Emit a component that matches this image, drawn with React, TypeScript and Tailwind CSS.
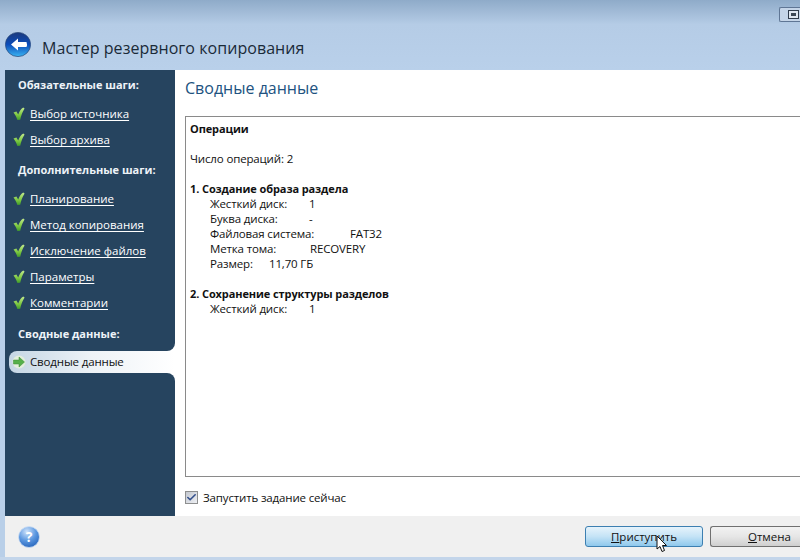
import { Check } from "lucide-react";

const font = { fontFamily: '"Open Sans", "Noto Sans", sans-serif' };

function Tick() {
  return (
    <svg width="13" height="14" viewBox="0 0 13 14" className="shrink-0">
      <defs>
        <linearGradient id="tick" x1="0" y1="0" x2="0" y2="1">
          <stop offset="0" stopColor="#c4ea8f" />
          <stop offset="0.6" stopColor="#7cc83f" />
          <stop offset="1" stopColor="#3f9a2c" />
        </linearGradient>
      </defs>
      <path d="M0.5 5.5 L3.4 4.6 L5.2 7.6 C6.2 4.6 7.8 2 10.2 0.5 L11.6 1.6 C9.6 4.6 8.2 8.4 7.2 12.8 L4.4 13 C3.6 10.2 2.2 7.6 0.5 5.5 Z" fill="url(#tick)" />
    </svg>
  );
}

function Heading({ children }: { children: string }) {
  return <div className="h-[26px] pl-[13px] text-[11px] leading-[26px] font-bold text-[#eef3f8]">{children}</div>;
}

function Step({ label }: { label: string }) {
  return (
    <div className="flex h-[26px] items-center gap-[4px] pl-[8px] text-[11.5px] text-white">
      <Tick />
      <span className="underline underline-offset-2">{label}</span>
    </div>
  );
}

function ActiveStep() {
  return (
    <div className="relative ml-[4px] flex h-[22px] items-center gap-[4px] rounded-l-[8px] bg-gradient-to-r from-[#c5d6e4] via-[#eef3f7] to-white pl-[3px] text-[11.5px] tracking-[-0.15px] text-[#111]">
      <svg width="14" height="14" viewBox="0 0 14 14" className="shrink-0">
        <circle cx="7" cy="7" r="6.5" fill="#e3efdc" />
        <path d="M1.5 5 H7 V2 L12.5 7 L7 12 V9 H1.5 Z" fill="#55b04a" stroke="#3b8a35" strokeWidth="0.5" />
      </svg>
      <span>Сводные данные</span>
      <div className="absolute -top-[8px] right-0 h-[8px] w-[8px] bg-white">
        <div className="h-full w-full rounded-br-[8px] bg-[#26445f]" />
      </div>
      <div className="absolute -bottom-[8px] right-0 h-[8px] w-[8px] bg-white">
        <div className="h-full w-full rounded-tr-[8px] bg-[#26445f]" />
      </div>
    </div>
  );
}

function Row({ label, value, width }: { label: string; value: string; width: number }) {
  return (
    <div className="flex h-[15px] pl-[20px]">
      <span style={{ width }}>{label}</span>
      <span>{value}</span>
    </div>
  );
}

export default function App() {
  return (
    <div style={font} className="relative flex h-[560px] w-[800px] flex-col overflow-hidden bg-[#b9cfe8]">
      <div className="relative flex h-[70px] items-start bg-gradient-to-b from-[#8fabc9] from-0% via-[#b5cce6] via-35% to-[#b9d0ea] pt-[32px] pl-[5px]">
        <svg width="26" height="25" viewBox="0 0 26 25" className="shrink-0">
          <defs>
            <linearGradient id="back" x1="0" y1="0" x2="0" y2="1">
              <stop offset="0" stopColor="#1c3a7d" />
              <stop offset="0.5" stopColor="#0b4cba" />
              <stop offset="1" stopColor="#3ab4f2" />
            </linearGradient>
          </defs>
          <ellipse cx="13" cy="12.5" rx="12.6" ry="12.1" fill="url(#back)" stroke="#2a4778" strokeWidth="0.7" />
          <path d="M6 12.5 L13 6.5 L13 10 L21.5 10 Q22.5 12.5 21.5 15 L13 15 L13 18.5 Z" fill="#fff" />
        </svg>
        <span className="mt-[-1px] ml-[11px] text-[16px] leading-[34px] tracking-[0.05px] text-[#1a2a38]">Мастер резервного копирования</span>
        <div className="absolute top-[7px] right-0 flex h-[15px] w-[21px] items-center rounded-l-[2px] border border-r-0 border-[#5f7695] bg-[#c5d5e8] pl-[8px]">
          <div className="flex h-[9px] w-[11px] items-center justify-center border border-[#2f3b4a] bg-[#dfe7f0]">
            <div className="h-[3px] w-[5px] bg-[#3b4754]" />
          </div>
        </div>
      </div>

      <div className="flex h-[446px] pl-[5px]">
        <div className="flex w-[170px] shrink-0 flex-col bg-[#26445f] pt-[2px]">
          <Heading>Обязательные шаги:</Heading>
          <div className="mt-[3px]">
            <Step label="Выбор источника" />
            <Step label="Выбор архива" />
          </div>
          <div className="mt-[4px]"><Heading>Дополнительные шаги:</Heading></div>
          <div className="mt-[3px]">
            <Step label="Планирование" />
            <Step label="Метод копирования" />
            <Step label="Исключение файлов" />
            <Step label="Параметры" />
            <Step label="Комментарии" />
          </div>
          <div className="mt-[5px] mb-[4px]"><Heading>Сводные данные:</Heading></div>
          <ActiveStep />
        </div>

        <div className="flex flex-1 flex-col bg-white pl-[10px]">
          <div className="h-[46px] pt-[6px] text-[16px] leading-[24px] text-[#21527f]">Сводные данные</div>
          <div className="h-[361px] border border-r-0 border-[#8a8a8a] pt-[4px] pl-[4px] text-[11.5px] leading-[15px] tracking-[-0.15px] text-[#111]">
            <div className="text-[11px] font-bold tracking-[-0.1px]">Операции</div>
            <div className="mt-[15px]">Число операций: 2</div>
            <div className="mt-[15px] text-[11px] font-bold tracking-[-0.1px]">1. Создание образа раздела</div>
            <Row label="Жесткий диск:" value="1" width={99} />
            <Row label="Буква диска:" value="-" width={99} />
            <Row label="Файловая система:" value="FAT32" width={140} />
            <Row label="Метка тома:" value="RECOVERY" width={100} />
            <Row label="Размер:" value="11,70 ГБ" width={59} />
            <div className="mt-[15px] text-[11px] font-bold tracking-[-0.1px]">2. Сохранение структуры разделов</div>
            <Row label="Жесткий диск:" value="1" width={99} />
          </div>
          <div className="mt-[12px] flex items-center gap-[5px] text-[11.5px] tracking-[-0.15px] text-[#111]">
            <div className="flex h-[13px] w-[13px] items-center justify-center border border-[#8e8f8f] bg-gradient-to-br from-[#c4c8d0] to-[#eef0f4]">
              <Check size={11} strokeWidth={3.5} className="text-[#34508c]" />
            </div>
            <span>Запустить задание сейчас</span>
          </div>
        </div>
      </div>

      <div className="ml-[5px] flex h-[41px] items-center bg-[#f0f0f0] pl-[13px]">
        <svg width="22" height="22" viewBox="0 0 22 22" className="shrink-0">
          <defs>
            <radialGradient id="help" cx="0.4" cy="0.25" r="0.85">
              <stop offset="0" stopColor="#cfe3fb" />
              <stop offset="0.5" stopColor="#5c98e0" />
              <stop offset="1" stopColor="#1d5bb5" />
            </radialGradient>
          </defs>
          <circle cx="11" cy="11" r="10.5" fill="url(#help)" stroke="#cfe0f4" strokeWidth="0.8" />
          <text x="11" y="16" textAnchor="middle" fontSize="14" fontWeight="700" fill="#fff" fontFamily="Open Sans, sans-serif">?</text>
        </svg>
        <div className="ml-auto flex gap-[7px]">
          <button className="flex h-[21px] w-[118px] items-center justify-center rounded-[3px] border border-[#3c7fb1] bg-gradient-to-b from-[#e6f3fb] via-[#c4e3f6] to-[#8fc8ec] text-[11.5px] text-[#111]">
            <span><span className="underline">П</span>риступить</span>
          </button>
          <button className="flex h-[21px] w-[90px] items-center justify-start rounded-l-[3px] border border-r-0 border-[#707070] bg-gradient-to-b from-[#f2f2f2] via-[#e6e6e6] to-[#cfcfcf] pl-[37px] text-[11.5px] text-[#111]">
            <span><span className="underline">О</span>тмена</span>
          </button>
        </div>
      </div>
      <div className="flex-1 bg-[#c3d5ea]" />

      <svg width="12" height="18" viewBox="0 0 12 18" className="absolute top-[535px] left-[656px]">
        <path d="M1 1 L1 14 L4 11.5 L6 16.5 L8.5 15.5 L6.5 10.5 L10.5 10.5 Z" fill="#fff" stroke="#111" strokeWidth="1" />
      </svg>
    </div>
  );
}
